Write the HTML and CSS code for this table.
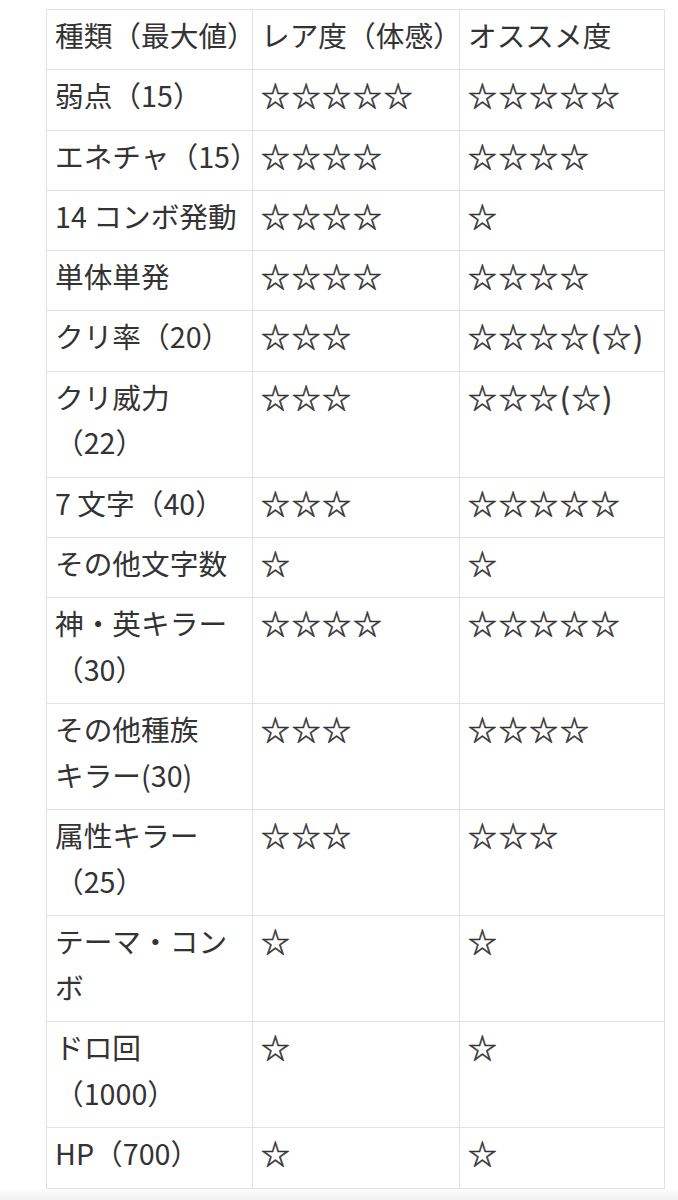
FILE: index.html
```html
<!DOCTYPE html>
<html lang="ja">
<head>
<meta charset="utf-8">
<title>種類一覧</title>
<link rel="stylesheet" href="styles.css">
</head>
<body>
<main class="page">
  <table class="rank-table">
    <colgroup>
      <col class="col-kind">
      <col class="col-rare">
      <col class="col-rec">
    </colgroup>
    <tbody>
      <tr><td>種類（最大値）</td><td>レア度（体感）</td><td>オススメ度</td></tr>
      <tr><td>弱点（15）</td><td class="stars">☆☆☆☆☆</td><td class="stars">☆☆☆☆☆</td></tr>
      <tr><td>エネチャ（15）</td><td class="stars">☆☆☆☆</td><td class="stars">☆☆☆☆</td></tr>
      <tr><td>14 コンボ発動</td><td class="stars">☆☆☆☆</td><td class="stars">☆</td></tr>
      <tr><td>単体単発</td><td class="stars">☆☆☆☆</td><td class="stars">☆☆☆☆</td></tr>
      <tr><td>クリ率（20）</td><td class="stars">☆☆☆</td><td class="stars">☆☆☆☆(☆)</td></tr>
      <tr><td>クリ威力<br>（22）</td><td class="stars">☆☆☆</td><td class="stars">☆☆☆(☆)</td></tr>
      <tr><td>7 文字（40）</td><td class="stars">☆☆☆</td><td class="stars">☆☆☆☆☆</td></tr>
      <tr><td>その他文字数</td><td class="stars">☆</td><td class="stars">☆</td></tr>
      <tr><td>神・英キラー<br>（30）</td><td class="stars">☆☆☆☆</td><td class="stars">☆☆☆☆☆</td></tr>
      <tr><td>その他種族<br>キラー(30)</td><td class="stars">☆☆☆</td><td class="stars">☆☆☆☆</td></tr>
      <tr><td>属性キラー<br>（25）</td><td class="stars">☆☆☆</td><td class="stars">☆☆☆</td></tr>
      <tr><td>テーマ・コン<br>ボ</td><td class="stars">☆</td><td class="stars">☆</td></tr>
      <tr><td>ドロ回<br>（1000）</td><td class="stars">☆</td><td class="stars">☆</td></tr>
      <tr><td>HP（700）</td><td class="stars">☆</td><td class="stars">☆</td></tr>
    </tbody>
  </table>
</main>
</body>
</html>
```

FILE: styles.css
```css
html, body {
  margin: 0;
  padding: 0;
  background: #ffffff;
}

body {
  font-family: "Noto Sans CJK JP", "Noto Sans", sans-serif;
  color: #333333;
}

.page {
  padding: 9px 0 0 46px;
  min-height: 1191px;
  background: linear-gradient(to bottom, #ffffff 0, #ffffff 1188px, #f1f1f1 1200px);
}

.rank-table {
  border-collapse: collapse;
  table-layout: fixed;
  width: 618px;
  background: #ffffff;
}

.col-kind { width: 206px; }
.col-rare { width: 207px; }
.col-rec  { width: 205px; }

.rank-table td {
  border: 1px solid #e2e2e2;
  padding: 2px 8px 11.6px 8px;
  font-size: 28.7px;
  line-height: 45.7px;
  white-space: nowrap;
  vertical-align: top;
  text-align: left;
  font-weight: 400;
}

.rank-table td.stars {
  letter-spacing: 2px;
  -webkit-text-stroke: 0.5px #333333;
}
```
